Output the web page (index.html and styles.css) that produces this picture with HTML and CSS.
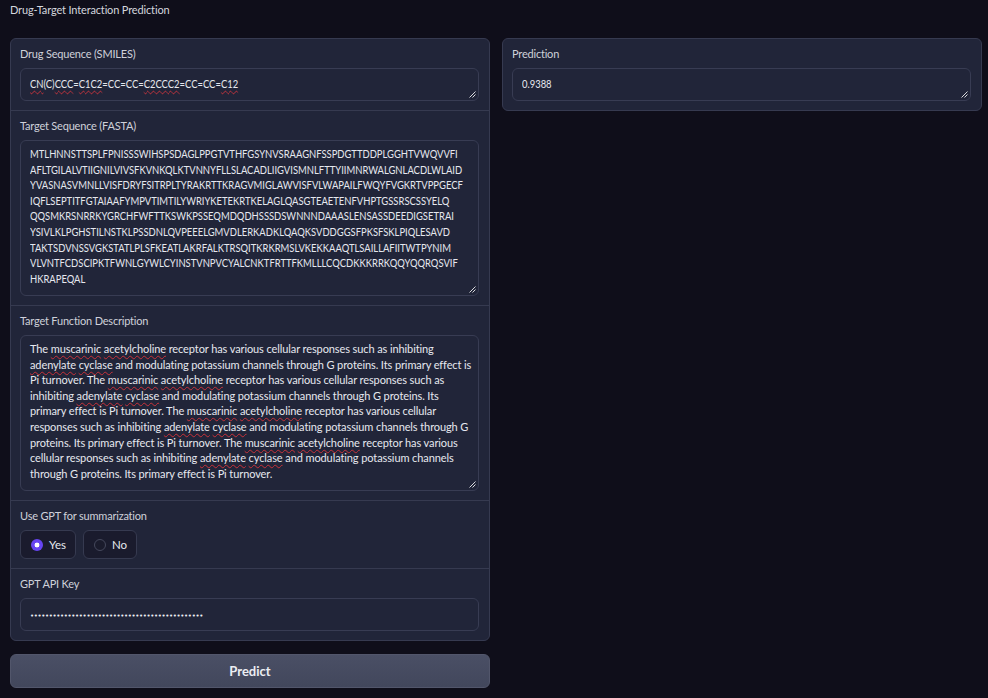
FILE: index.html
```html
<!DOCTYPE html>
<html lang="en">
<head>
<meta charset="utf-8">
<title>Drug-Target Interaction Prediction</title>
<link rel="stylesheet" href="styles.css">
</head>
<body>
<div class="app">
  <div class="title">Drug-Target Interaction Prediction</div>
  <div class="row">
    <div class="col">
      <div class="panel">
        <div class="block">
          <div class="label">Drug Sequence (SMILES)</div>
          <div class="field single"><span class="narrow"><span class="sp">CN</span>(C)<span class="sp">CCC</span>=<span class="sp">C1C2</span>=CC=CC=<span class="sp">C2CCC2</span>=CC=CC=<span class="sp">C12</span></span><svg class="grip" width="7" height="7" viewBox="0 0 7 7"><path d="M0.5 6.5 L6.5 0.5 M3.5 6.5 L6.5 3.5" stroke="#d8d8dc" stroke-width="1" fill="none"/></svg></div>
        </div>
        <div class="block">
          <div class="label">Target Sequence (FASTA)</div>
          <div class="field multi"><span class="narrow">MTLHNNSTTSPLFPNISSSWIHSPSDAGLPPGTVTHFGSYNVSRAAGNFSSPDGTTDDPLGGHTVWQVVFI
AFLTGILALVTIIGNILVIVSFKVNKQLKTVNNYFLLSLACADLIIGVISMNLFTTYIIMNRWALGNLACDLWLAID
YVASNASVMNLLVISFDRYFSITRPLTYRAKRTTKRAGVMIGLAWVISFVLWAPAILFWQYFVGKRTVPPGECF
IQFLSEPTITFGTAIAAFYMPVTIMTILYWRIYKETEKRTKELAGLQASGTEAETENFVHPTGSSRSCSSYELQ
QQSMKRSNRRKYGRCHFWFTTKSWKPSSEQMDQDHSSSDSWNNNDAAASLENSASSDEEDIGSETRAI
YSIVLKLPGHSTILNSTKLPSSDNLQVPEEELGMVDLERKADKLQAQKSVDDGGSFPKSFSKLPIQLESAVD
TAKTSDVNSSVGKSTATLPLSFKEATLAKRFALKTRSQITKRKRMSLVKEKKAAQTLSAILLAFIITWTPYNIM
VLVNTFCDSCIPKTFWNLGYWLCYINSTVNPVCYALCNKTFRTTFKMLLLCQCDKKKRRKQQYQQRQSVIF
HKRAPEQAL</span><svg class="grip" width="7" height="7" viewBox="0 0 7 7"><path d="M0.5 6.5 L6.5 0.5 M3.5 6.5 L6.5 3.5" stroke="#d8d8dc" stroke-width="1" fill="none"/></svg></div>
        </div>
        <div class="block">
          <div class="label">Target Function Description</div>
          <div class="field multi prose">The <span class="sp">muscarinic</span> <span class="sp">acetylcholine</span> receptor has various cellular responses such as inhibiting
<span class="sp">adenylate</span> <span class="sp">cyclase</span> and modulating potassium channels through G proteins. Its primary effect is
Pi turnover. The <span class="sp">muscarinic</span> <span class="sp">acetylcholine</span> receptor has various cellular responses such as
inhibiting <span class="sp">adenylate</span> <span class="sp">cyclase</span> and modulating potassium channels through G proteins. Its
primary effect is Pi turnover. The <span class="sp">muscarinic</span> <span class="sp">acetylcholine</span> receptor has various cellular
responses such as inhibiting <span class="sp">adenylate</span> <span class="sp">cyclase</span> and modulating potassium channels through G
proteins. Its primary effect is Pi turnover. The <span class="sp">muscarinic</span> <span class="sp">acetylcholine</span> receptor has various
cellular responses such as inhibiting <span class="sp">adenylate</span> <span class="sp">cyclase</span> and modulating potassium channels
through G proteins. Its primary effect is Pi turnover.<svg class="grip" width="7" height="7" viewBox="0 0 7 7"><path d="M0.5 6.5 L6.5 0.5 M3.5 6.5 L6.5 3.5" stroke="#d8d8dc" stroke-width="1" fill="none"/></svg></div>
        </div>
        <div class="block">
          <div class="label">Use GPT for summarization</div>
          <div class="radios">
            <label class="radio"><span class="dot on"></span><span>Yes</span></label>
            <label class="radio"><span class="dot"></span><span>No</span></label>
          </div>
        </div>
        <div class="block">
          <div class="label">GPT API Key</div>
          <div class="field single pw"><span class="bullets">••••••••••••••••••••••••••••••••••••••••••••••</span></div>
        </div>
      </div>
      <button class="predict">Predict</button>
    </div>
    <div class="col">
      <div class="panel">
        <div class="block">
          <div class="label">Prediction</div>
          <div class="field single"><span class="narrow">0.9388</span><svg class="grip" width="7" height="7" viewBox="0 0 7 7"><path d="M0.5 6.5 L6.5 0.5 M3.5 6.5 L6.5 3.5" stroke="#d8d8dc" stroke-width="1" fill="none"/></svg></div>
        </div>
      </div>
    </div>
  </div>
</div>
</body>
</html>
```
FILE: styles.css
```css
html, body {
  margin: 0;
  padding: 0;
  background: #0f0e1a;
}
body {
  font-family: "Lato", "Liberation Sans", sans-serif;
  font-size: 11px;
  color: #e3e5ec;
}
.app {
  padding: 2px 6px 0 10px;
}
.title {
  color: #d4d6de;
  font-size: 11px;
  letter-spacing: -0.15px;
  line-height: 16px;
  height: 16px;
  margin-bottom: 20px;
}
.row {
  display: flex;
  gap: 12px;
  align-items: flex-start;
}
.col {
  flex: 1 1 0;
  min-width: 0;
  display: flex;
  flex-direction: column;
  gap: 13px;
}
.panel {
  background: #212539;
  border: 1px solid #363a50;
  border-radius: 6px;
  display: flex;
  flex-direction: column;
  overflow: hidden;
}
.block {
  padding: 7px 10px 9px 9px;
  border-top: 1px solid #363a50;
}
.block:first-child {
  border-top: none;
}
.label {
  color: #cfd1da;
  font-size: 11px;
  letter-spacing: -0.2px;
  line-height: 15px;
  height: 15px;
  margin-bottom: 7px;
}
.field {
  position: relative;
  box-sizing: border-box;
  border: 1px solid #383c53;
  border-radius: 6px;
  background: #212539;
  color: #e6e8ef;
  font-size: 11px;
  line-height: 15.6px;
  white-space: pre;
  overflow: hidden;
  padding: 5px 9px;
}
.field.single {
  height: 33px;
  padding-top: 7px;
}
.field.multi {
  height: 156px;
}
.prose {
  letter-spacing: -0.1px;
}
.narrow {
  display: inline-block;
  font-size: 11.5px;
  transform: scaleX(0.82);
  transform-origin: 0 0;
}
.sp {
  text-decoration: underline wavy #c8323a;
  text-decoration-thickness: 1px;
  text-underline-offset: 2px;
  text-decoration-skip-ink: none;
}
.grip {
  position: absolute;
  right: 2px;
  bottom: 2px;
}
.pw {
  padding-top: 8px;
}
.bullets {
  font-family: "DejaVu Sans", sans-serif;
  font-size: 7px;
  letter-spacing: -0.37px;
  line-height: 15px;
  color: #eceef3;
}
.radios {
  display: flex;
  gap: 7px;
}
.radio {
  display: flex;
  align-items: center;
  gap: 6px;
  height: 29px;
  box-sizing: border-box;
  padding: 0 9px 0 10px;
  border: 1px solid #363a50;
  border-radius: 6px;
  background: #1a1b2d;
  color: #e6e8ef;
  font-size: 11.5px;
}
.dot {
  width: 12px;
  height: 12px;
  box-sizing: border-box;
  border-radius: 50%;
  border: 1px solid #45485c;
  background: #1a1b2c;
}
.dot.on {
  border: none;
  background: radial-gradient(circle, #ffffff 0 2.2px, #6644f2 2.7px);
}
.predict {
  height: 34px;
  border: 1px solid #52566b;
  border-radius: 6px;
  background: linear-gradient(#4a4f65, #42475c);
  color: #eceef3;
  font-family: "Lato", "Liberation Sans", sans-serif;
  font-size: 13px;
  font-weight: bold;
  padding: 0;
  cursor: pointer;
}
```
